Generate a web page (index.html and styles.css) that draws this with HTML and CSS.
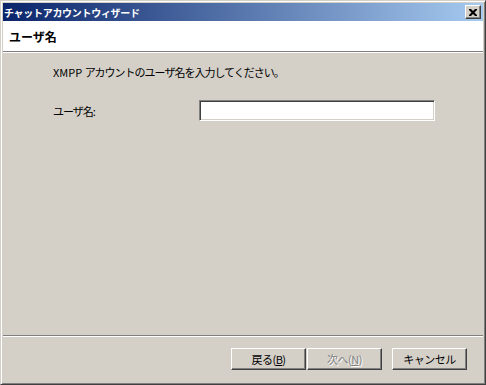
FILE: index.html
```html
<html>

<head>
    <link rel="stylesheet" href="styles.css">
</head>

<body>
    <div class="window">
        <div class="titlebar">
            <span class="title">チャットアカウントウィザード</span>
            <div class="close">
                <svg width="8" height="7" viewBox="0 0 8 7">
                    <path d="M0 0h2l2 2 2-2h2v1l-2.5 2.5L8 6v1H6L4 5 2 7H0V6l2.5-2.5L0 1z" fill="#000"/>
                </svg>
            </div>
        </div>
        <div class="header">ユーザ名</div>
        <div class="content">
            <p class="intro"><span class="latin">XMPP </span>アカウントのユーザ名を入力してください。</p>
            <div class="row">
                <span class="label">ユーザ名:</span>
                <input type="text" class="field">
            </div>
        </div>
        <div class="footer">
            <div class="pair">
                <button class="btn">戻る(<u>B</u>)</button>
                <button class="btn disabled">次へ(<u>N</u>)</button>
            </div>
            <button class="btn">キャンセル</button>
        </div>
    </div>
</body>

</html>
```

FILE: styles.css
```css
body {
    margin: 0;
    background: #d4d0c8;
    font-family: "Noto Sans CJK JP", "Noto Sans", sans-serif;
    font-size: 11px;
    color: #000;
}
.window {
    width: 486px;
    height: 385px;
    box-sizing: border-box;
    border: 1px solid;
    border-color: #d4d0c8 #404040 #404040 #d4d0c8;
    box-shadow: inset 1px 1px #fff, inset -1px -1px #808080;
    padding: 2px;
    display: flex;
    flex-direction: column;
}
.titlebar {
    height: 18px;
    background: linear-gradient(90deg, #0a246a, #a6caf0);
    display: flex;
    align-items: center;
    justify-content: space-between;
    padding: 0 2px 0 1px;
}
.title {
    color: #fff;
    font-weight: bold;
    font-size: 10px;
    letter-spacing: -0.3px;
}
.close {
    width: 16px;
    height: 14px;
    box-sizing: border-box;
    background: #d4d0c8;
    border: 1px solid;
    border-color: #fff #404040 #404040 #fff;
    box-shadow: inset -1px -1px #808080;
    display: flex;
    align-items: center;
    justify-content: center;
}
.header {
    height: 30px;
    background: #fff;
    border-bottom: 1px solid #808080;
    box-shadow: 0 1px #fff;
    font-weight: bold;
    font-size: 12px;
    display: flex;
    align-items: center;
    padding-left: 6px;
}
.content {
    flex: 1;
    padding: 12px 0 0 50px;
    letter-spacing: -1px;
}
.latin {
    letter-spacing: 0;
    white-space: pre;
}
.intro {
    margin: 0 0 20px 0;
    line-height: 16px;
}
.row {
    display: flex;
    align-items: center;
}
.label {
    width: 146px;
}
.field {
    width: 236px;
    height: 21px;
    box-sizing: border-box;
    border: 1px solid;
    border-color: #808080 #fff #fff #808080;
    box-shadow: inset 1px 1px #404040, inset -1px -1px #d4d0c8;
    background: #fff;
    outline: none;
}
.footer {
    height: 47px;
    border-top: 1px solid #808080;
    box-shadow: inset 0 1px #fff;
    display: flex;
    justify-content: flex-end;
    align-items: flex-start;
    gap: 10px;
    padding: 12px 16px 0 0;
    box-sizing: border-box;
}
.pair {
    display: flex;
    gap: 1px;
}
.btn {
    width: 75px;
    height: 22px;
    box-sizing: border-box;
    background: #d4d0c8;
    border: 1px solid;
    border-color: #fff #404040 #404040 #fff;
    box-shadow: inset -1px -1px #808080;
    font-family: "Noto Sans CJK JP", "Noto Sans", sans-serif;
    font-size: 11px;
    letter-spacing: -0.5px;
    color: #000;
    padding: 0;
}
.disabled {
    color: #808080;
    text-shadow: 1px 1px #fff;
}
```
